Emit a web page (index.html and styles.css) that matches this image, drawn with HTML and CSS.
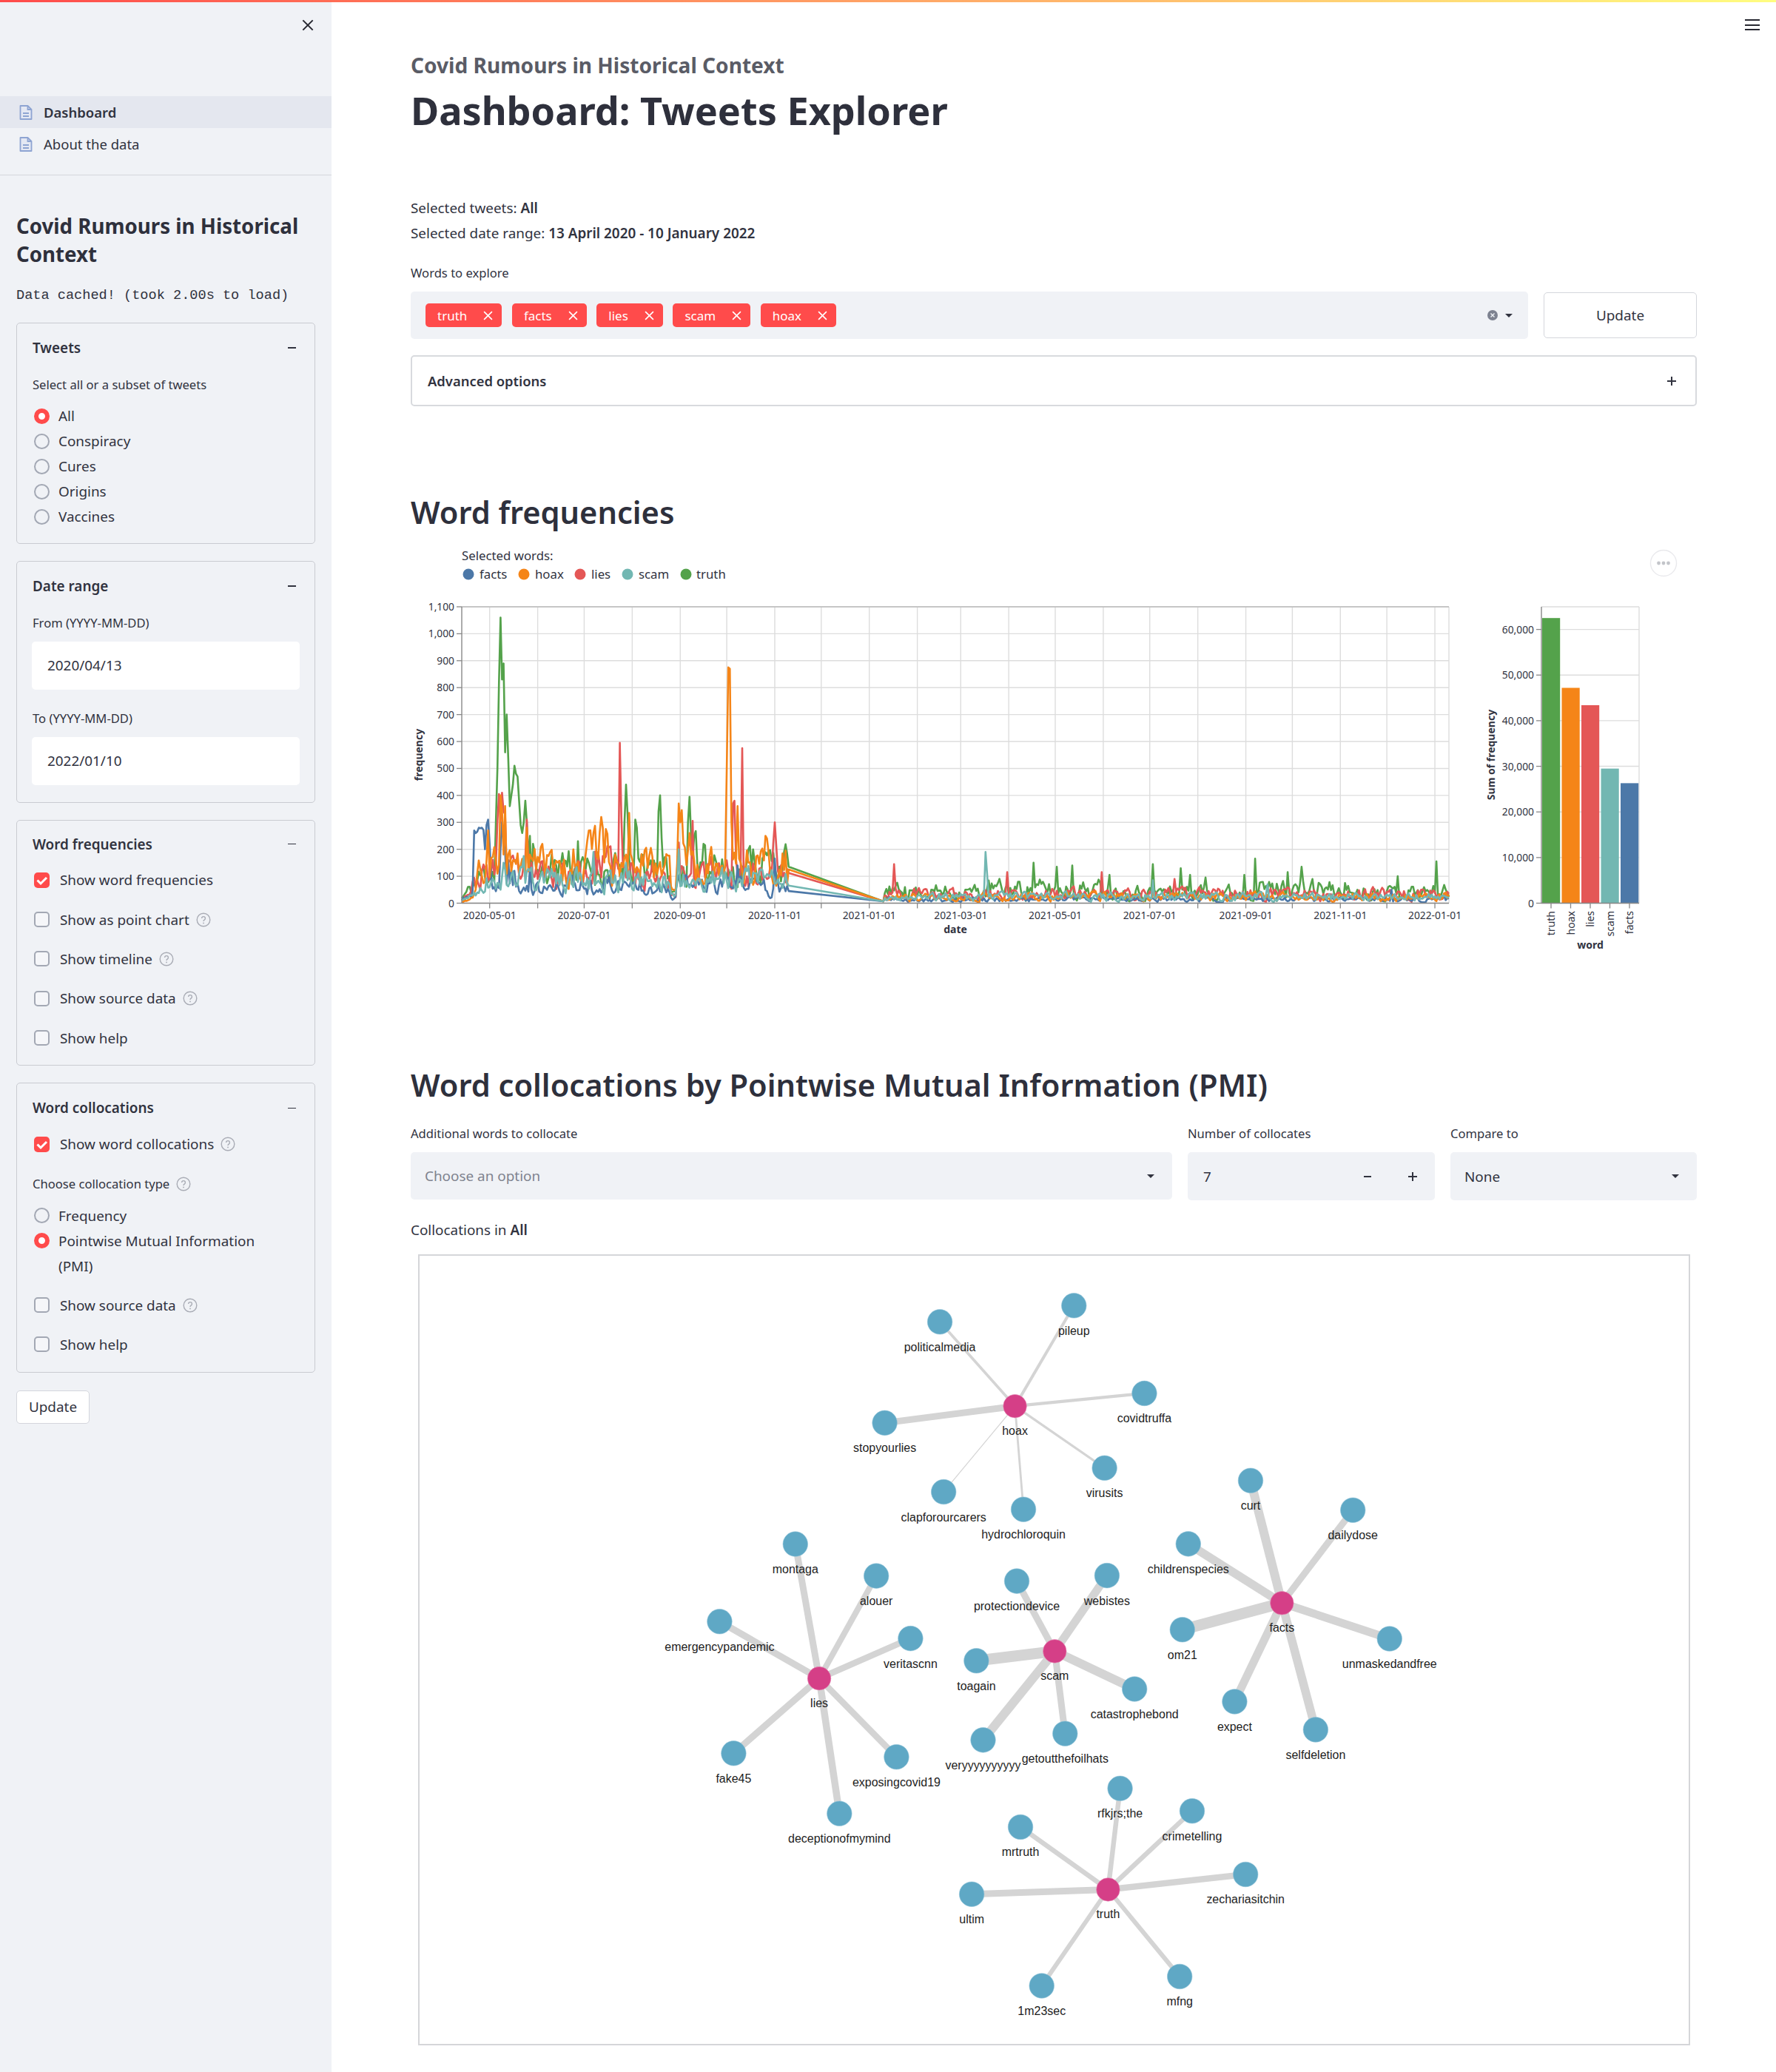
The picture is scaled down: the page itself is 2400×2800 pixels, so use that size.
FILE: index.html
```html
<!DOCTYPE html>
<html lang="en">
<head>
    <meta charset="UTF-8">
    <title>Dashboard: Tweets Explorer</title>
    <link rel="stylesheet" href="styles.css">
</head>
<body>
    <svg class="icon-defs" aria-hidden="true">
        <symbol id="i-page" viewBox="0 0 18 20">
            <path d="M1.5 1h10l5 5v13h-15z" fill="#e4e8f3" stroke="#8ea4d2" stroke-width="1.8" stroke-linejoin="round"/>
            <path d="M11.5 1v5h5M5 11h8M5 15h8" fill="none" stroke="#8ea4d2" stroke-width="1.8"/>
        </symbol>
        <symbol id="i-help" viewBox="0 0 20 20">
            <circle cx="10" cy="10" r="8.8" fill="none" stroke="#a9acb5" stroke-width="1.4"/>
            <path d="M7.6 8a2.4 2.4 0 1 1 3.6 2.1c-.8.5-1.2.9-1.2 1.8" fill="none" stroke="#a9acb5" stroke-width="1.4"/>
            <circle cx="10" cy="14.4" r=".9" fill="#a9acb5"/>
        </symbol>
        <symbol id="i-check" viewBox="0 0 21 21">
            <path d="M4.5 10.5l4.5 4.5 8-8" fill="none" stroke="#fff" stroke-width="3"/>
        </symbol>
        <symbol id="i-x" viewBox="0 0 12 12">
            <path d="M1 1l10 10M11 1l-10 10" fill="none" stroke="currentColor" stroke-width="1.5"/>
        </symbol>
    </svg>

    <div class="topline"></div>

    <div class="app">
        <aside class="sidebar">
            <div class="sidebar-top">
                <svg class="close-icon"><use href="#i-x"/></svg>
            </div>
            <nav class="side-nav">
                <a class="nav-item active"><svg class="nav-icon"><use href="#i-page"/></svg>Dashboard</a>
                <a class="nav-item"><svg class="nav-icon"><use href="#i-page"/></svg>About the data</a>
            </nav>

            <h2 class="side-title">Covid Rumours in Historical Context</h2>
            <code class="cache-note">Data cached! (took 2.00s to load)</code>

            <section class="group group-tweets">
                <div class="group-head"><span>Tweets</span><i class="minus"></i></div>
                <div class="side-label label-first">Select all or a subset of tweets</div>
                <div class="radios">
                    <div class="radio on"><i></i>All</div>
                    <div class="radio"><i></i>Conspiracy</div>
                    <div class="radio"><i></i>Cures</div>
                    <div class="radio"><i></i>Origins</div>
                    <div class="radio"><i></i>Vaccines</div>
                </div>
            </section>

            <section class="group group-dates">
                <div class="group-head"><span>Date range</span><i class="minus"></i></div>
                <div class="side-label label-from">From (YYYY-MM-DD)</div>
                <div class="date-input">2020/04/13</div>
                <div class="side-label label-to">To (YYYY-MM-DD)</div>
                <div class="date-input">2022/01/10</div>
            </section>

            <section class="group group-freq">
                <div class="group-head"><span>Word frequencies</span><i class="minus"></i></div>
                <div class="checks">
                    <div class="check on"><i><svg><use href="#i-check"/></svg></i>Show word frequencies</div>
                    <div class="check"><i></i>Show as point chart<svg class="help"><use href="#i-help"/></svg></div>
                    <div class="check"><i></i>Show timeline<svg class="help"><use href="#i-help"/></svg></div>
                    <div class="check"><i></i>Show source data<svg class="help"><use href="#i-help"/></svg></div>
                    <div class="check"><i></i>Show help</div>
                </div>
            </section>

            <section class="group group-coll">
                <div class="group-head"><span>Word collocations</span><i class="minus"></i></div>
                <div class="checks">
                    <div class="check on"><i><svg><use href="#i-check"/></svg></i>Show word collocations<svg class="help"><use href="#i-help"/></svg></div>
                </div>
                <div class="side-label label-type">Choose collocation type<svg class="help"><use href="#i-help"/></svg></div>
                <div class="radios radios-type">
                    <div class="radio"><i></i>Frequency</div>
                    <div class="radio on"><i></i><span class="radio-long">Pointwise Mutual Information (PMI)</span></div>
                </div>
                <div class="checks checks-last">
                    <div class="check"><i></i>Show source data<svg class="help"><use href="#i-help"/></svg></div>
                    <div class="check"><i></i>Show help</div>
                </div>
            </section>

            <button class="side-button">Update</button>
        </aside>

        <main class="main">
            <div class="hamburger"><i></i><i></i><i></i></div>

            <div class="subhead">Covid Rumours in Historical Context</div>
            <h1>Dashboard: Tweets Explorer</h1>

            <p class="selected first">Selected tweets: <b>All</b></p>
            <p class="selected">Selected date range: <b>13 April 2020 - 10 January 2022</b></p>

            <label class="field-label words-label">Words to explore</label>
            <div class="words-row">
                <div class="multiselect">
                    <span class="tag">truth<svg><use href="#i-x"/></svg></span>
                    <span class="tag">facts<svg><use href="#i-x"/></svg></span>
                    <span class="tag">lies<svg><use href="#i-x"/></svg></span>
                    <span class="tag">scam<svg><use href="#i-x"/></svg></span>
                    <span class="tag">hoax<svg><use href="#i-x"/></svg></span>
                    <span class="clear-all"><svg viewBox="0 0 14 14"><circle cx="7" cy="7" r="7" fill="#7d8290"/><path d="M4.5 4.5l5 5M9.5 4.5l-5 5" stroke="#f0f2f6" stroke-width="1.4"/></svg></span>
                    <i class="caret"></i>
                </div>
                <button class="update-button">Update</button>
            </div>

            <div class="expander"><span>Advanced options</span><i class="plus"></i></div>

            <h2 class="section-title freq-title">Word frequencies</h2>
            <svg id="freq-chart" class="freq-chart" viewBox="555 735 1738 565"></svg>

            <h2 class="section-title coll-title">Word collocations by Pointwise Mutual Information (PMI)</h2>
            <div class="coll-controls">
                <div class="control control-words">
                    <label class="field-label">Additional words to collocate</label>
                    <div class="select placeholder">Choose an option<i class="caret"></i></div>
                </div>
                <div class="control control-num">
                    <label class="field-label">Number of collocates</label>
                    <div class="select number">7<span class="stepper"><i class="step-minus"></i><i class="plus"></i></span></div>
                </div>
                <div class="control control-cmp">
                    <label class="field-label">Compare to</label>
                    <div class="select">None<i class="caret"></i></div>
                </div>
            </div>

            <p class="selected coll-in">Collocations in <b>All</b></p>
            <div class="graph-box">
                <svg id="coll-graph" class="coll-graph" viewBox="566 1696 1717 1066"></svg>
            </div>
        </main>
    </div>

    <script src="charts.js"></script>
</body>
</html>
```
FILE: styles.css
```css
* {
    box-sizing: border-box;
}
body {
    margin: 0;
    font-family: "Noto Sans", sans-serif;
    font-size: 18.9px;
    color: #31333f;
    background: #fff;
    width: 2400px;
    height: 2800px;
    overflow: hidden;
}
.icon-defs {
    position: absolute;
    width: 0;
    height: 0;
}
.topline {
    position: absolute;
    top: 0;
    left: 0;
    right: 0;
    height: 3px;
    background: linear-gradient(90deg, #ff4b4b, #fffd80);
}
.app {
    display: flex;
    height: 2800px;
}

/* sidebar */
.sidebar {
    width: 448px;
    flex: none;
    background: #f0f2f6;
    display: flex;
    flex-direction: column;
}
.sidebar-top {
    height: 130px;
    display: flex;
    justify-content: flex-end;
    padding: 26px 24px 0 0;
}
.close-icon {
    width: 16px;
    height: 16px;
    color: #262730;
}
.side-nav {
    padding-bottom: 20px;
    border-bottom: 1.5px solid #d4d6dc;
}
.nav-item {
    display: flex;
    align-items: center;
    height: 43px;
    padding-left: 26px;
    font-size: 18.5px;
    color: #31333f;
}
.nav-item.active {
    background: #e4e7ef;
    font-weight: 600;
}
.nav-icon {
    width: 18px;
    height: 20px;
    margin-right: 15px;
}
.side-title {
    margin: 49px 22px 0;
    font-size: 27.7px;
    line-height: 38px;
    font-weight: 700;
    color: #2e303c;
}
.cache-note {
    display: block;
    margin: 24px 22px 0;
    font-family: "Liberation Mono", monospace;
    font-size: 18.6px;
    line-height: 28px;
    color: #31333f;
}
.group {
    margin: 22px 22px 0;
    border: 1.5px solid #c9cbd1;
    border-radius: 5px;
    padding: 0 21px;
}
.group-dates, .group-freq, .group-coll {
    margin-top: 23px;
}
.group-head {
    display: flex;
    justify-content: space-between;
    align-items: center;
    height: 30px;
    font-weight: 600;
}
.group-tweets { padding-top: 18px; padding-bottom: 19px; }
.group-dates { padding-top: 18px; padding-bottom: 22.5px; }
.group-freq { padding-top: 17px; padding-bottom: 10px; }
.group-coll { padding-top: 18px; padding-bottom: 10px; }
.minus {
    width: 11px;
    height: 1.5px;
    margin-right: 4px;
    background: #31333f;
}
.side-label {
    display: flex;
    align-items: center;
    height: 26px;
    font-size: 16.6px;
}
.label-first { margin-top: 21px; }
.label-from { margin-top: 21px; }
.label-to { margin-top: 25px; }
.label-type { margin-top: 14px; }
.radios { margin-top: 13px; }
.radio {
    display: flex;
    min-height: 34px;
    line-height: 34px;
}
.radio i {
    flex: none;
    width: 21px;
    height: 21px;
    margin: 6.5px 12px 0 2px;
    border: 2px solid #a3a8b4;
    border-radius: 50%;
    background: #f0f2f6;
}
.radio.on i {
    border: 6.5px solid #ff4b4b;
    background: #fff;
}
.radio-long {
    max-width: 300px;
}
.date-input {
    height: 65px;
    margin: 13px -1px 0;
    padding-left: 21px;
    background: #fff;
    border-radius: 5px;
    line-height: 65px;
}
.checks { margin-top: 7px; }
.checks-last { margin-top: 9px; }
.check {
    display: flex;
    align-items: center;
    height: 53.4px;
}
.check i {
    flex: none;
    width: 21px;
    height: 21px;
    margin: 0 14px 0 2px;
    border: 2.3px solid #a3a8b4;
    border-radius: 5px;
    background: #f5f6f9;
}
.check.on i {
    border: none;
    background: #ff4b4b;
}
.check i svg {
    display: block;
    width: 21px;
    height: 21px;
}
.help {
    width: 20px;
    height: 20px;
    margin-left: 9px;
}
.side-button {
    align-self: flex-start;
    margin: 24px 0 0 22px;
    width: 99px;
    height: 45px;
    padding: 0;
    background: #fff;
    border: 1.5px solid #d4d6dc;
    border-radius: 5px;
    font: inherit;
    color: #31333f;
}

/* main column */
.main {
    position: relative;
    flex: 1;
    padding: 68px 107px 0;
}
.hamburger {
    position: absolute;
    top: 26px;
    right: 22px;
    width: 20px;
}
.hamburger i {
    display: block;
    height: 2px;
    margin-bottom: 4.5px;
    background: #262730;
}
.subhead {
    font-size: 28.1px;
    line-height: 40px;
    font-weight: 700;
    color: #5a5c66;
}
h1 {
    margin: 6px 0 0;
    font-size: 52.2px;
    line-height: 70px;
    font-weight: 700;
    color: #2e303c;
}
.selected {
    margin: 0;
    line-height: 34px;
}
.selected b {
    font-weight: 600;
}
.selected.first {
    margin-top: 80px;
}
.field-label {
    display: block;
    height: 26px;
    line-height: 26px;
    font-size: 16.6px;
}
.words-label {
    margin-top: 24px;
}
.words-row {
    display: flex;
    align-items: flex-start;
    gap: 21px;
    margin-top: 12px;
}
.multiselect {
    flex: 1;
    display: flex;
    align-items: center;
    gap: 13.6px;
    height: 64px;
    padding: 0 21px 0 20px;
    background: #f0f2f6;
    border-radius: 5px;
}
.tag {
    display: flex;
    align-items: center;
    height: 32px;
    padding: 0 12px 0 16px;
    background: #ff4b4b;
    color: #fff;
    border-radius: 5px;
    font-size: 17px;
}
.tag svg {
    width: 13px;
    height: 13px;
    margin-left: 22px;
}
.clear-all {
    margin-left: auto;
    height: 14px;
}
.clear-all svg {
    display: block;
    width: 14px;
    height: 14px;
}
.caret {
    width: 0;
    height: 0;
    border-left: 5px solid transparent;
    border-right: 5px solid transparent;
    border-top: 5px solid #31333f;
}
.multiselect .caret {
    margin-left: -4px;
}
.update-button {
    width: 207px;
    height: 62px;
    margin-top: 1px;
    background: #fff;
    border: 1.5px solid #d4d6dc;
    border-radius: 5px;
    font: inherit;
    color: #31333f;
}
.expander {
    display: flex;
    justify-content: space-between;
    align-items: center;
    height: 69px;
    margin-top: 22px;
    padding: 0 26px 0 21px;
    border: 2px solid #d8dade;
    border-radius: 5px;
    font-size: 18.4px;
    font-weight: 600;
}
.plus {
    position: relative;
    display: block;
    width: 12px;
    height: 12px;
}
.plus::before, .plus::after {
    content: "";
    position: absolute;
    background: #31333f;
}
.plus::before {
    left: 0;
    right: 0;
    top: 5px;
    height: 2px;
}
.plus::after {
    top: 0;
    bottom: 0;
    left: 5px;
    width: 2px;
}
.section-title {
    margin: 0;
    font-size: 41.6px;
    line-height: 60px;
    font-weight: 600;
    color: #2e303c;
}
.freq-title {
    margin-top: 113px;
}
.freq-chart {
    display: block;
    width: 1738px;
    height: 565px;
    margin-top: 13px;
}
.coll-title {
    margin-top: 136px;
}
.coll-controls {
    display: flex;
    gap: 21px;
    margin-top: 23px;
}
.control-words { width: 1029px; }
.control-num { width: 334px; }
.control-cmp { width: 333px; }
.select {
    display: flex;
    justify-content: space-between;
    align-items: center;
    height: 65px;
    margin-top: 12px;
    padding: 0 24px 0 19px;
    background: #f0f2f6;
    border-radius: 5px;
}
.control-words .select {
    height: 64px;
}
.placeholder {
    color: #7f838f;
}
.number {
    padding-left: 21px;
    padding-right: 24px;
}
.stepper {
    display: flex;
    align-items: center;
    gap: 50px;
}
.step-minus {
    width: 10px;
    height: 2px;
    background: #31333f;
}
.coll-in {
    margin-top: 23px;
}
.graph-box {
    width: 1719px;
    height: 1069px;
    margin: 16px 0 0 10px;
    border: 2px solid #d5d6d9;
}
.coll-graph {
    display: block;
    width: 1715px;
    height: 1065px;
}

/* svg charts */
.tick-text {
    font-family: "Noto Sans", sans-serif;
    font-size: 13.8px;
    fill: #31333f;
}
.axis-title {
    font-family: "Noto Sans", sans-serif;
    font-size: 14px;
    font-weight: 700;
    fill: #31333f;
}
.legend-title, .legend-text {
    font-family: "Noto Sans", sans-serif;
    font-size: 16.8px;
    fill: #31333f;
}
.bar-label {
    font-family: "Noto Sans", sans-serif;
    font-size: 14px;
    fill: #31333f;
}
.node-label {
    font-family: "Liberation Sans", Arial, sans-serif;
    font-size: 16px;
    fill: #1d1d1d;
    text-anchor: middle;
}
```
FILE: charts.js
```js
// word frequency chart + collocation graph, drawn into the two svgs

const COLORS = {
    facts: "#4c78a8",
    hoax: "#f58518",
    lies: "#e45756",
    scam: "#72b7b2",
    truth: "#54a24b"
};

const X0 = 624, PX_DAY = 2.094;
const Y0 = 1220.5, PX_VAL = 0.3641;
const xDay = d => X0 + d * PX_DAY;
const yVal = v => Y0 - v * PX_VAL;

// small seeded generator so the noise is the same on every load
function makeRand(seed) {
    return function () {
        seed = (seed + 0x6D2B79F5) | 0;
        let t = Math.imul(seed ^ (seed >>> 15), 1 | seed);
        t = (t + Math.imul(t ^ (t >>> 7), 61 | t)) ^ t;
        return ((t ^ (t >>> 14)) >>> 0) / 4294967296;
    };
}

// base = [first stretch level, second stretch level], peaks = [day, value],
// humps = [from, to, factor] for slow changes of the level
const SERIES = {
    truth: {
        base: [120, 42], seed: 11, end: 135, humps: [[60, 70, 1.3], [115, 128, 1.2], [150, 165, 1.35], [185, 211, 1.25], [340, 420, 1.25], [505, 560, 1.3]],
        peaks: [[22, 300], [23, 500], [24, 820], [25, 1060], [26, 830], [27, 890], [28, 560], [29, 700], [30, 540], [31, 360], [32, 400],
            [33, 440], [34, 510], [35, 480], [36, 470], [37, 380], [38, 290], [39, 260], [40, 300], [41, 380], [42, 300], [44, 250], [46, 220], [47, 190],
            [58, 180], [75, 230], [105, 300], [106, 440], [107, 330], [112, 310], [113, 280], [127, 340], [128, 400], [129, 240],
            [146, 300], [147, 395], [148, 250], [156, 220], [157, 215], [188, 200], [208, 190],
            [286, 60], [369, 150], [384, 135], [394, 140], [418, 105], [446, 145], [464, 130], [470, 105], [480, 95],
            [512, 165], [505, 105], [533, 115], [542, 135], [570, 75], [604, 100], [629, 155]]
    },
    lies: {
        base: [112, 34], seed: 23, end: 112, humps: [[85, 100, 1.25]],
        peaks: [[23, 300], [24, 405], [25, 300], [26, 410], [27, 340], [28, 330], [42, 310], [60, 130], [88, 190], [102, 595], [103, 320], [140, 225],
            [149, 305], [175, 370], [176, 380], [181, 575], [201, 220], [202, 300], [203, 210], [279, 145], [352, 115], [413, 115], [460, 90]]
    },
    facts: {
        base: [68, 14], seed: 37, end: 45, humps: [[35, 65, 0.75], [196, 211, 0.7]],
        peaks: [[8, 270], [9, 260], [10, 265], [11, 280], [12, 278], [13, 280], [14, 272], [15, 200], [16, 290], [17, 310],
            [18, 220], [25, 200], [26, 300], [27, 230], [28, 190], [30, 160], [32, 125], [34, 120], [44, 130], [140, 100], [178, 140], [202, 165], [600, 50]]
    },
    hoax: {
        base: [145, 24], seed: 51, end: 125, humps: [[0, 9, 0.35], [72, 96, 1.35], [140, 150, 1.2]],
        peaks: [[12, 125], [17, 270], [25, 400], [26, 350], [28, 360], [42, 280], [52, 220], [72, 200], [82, 270], [90, 320], [91, 280], [93, 275],
            [108, 335], [122, 205], [140, 370], [141, 300], [142, 345], [147, 260], [171, 500], [172, 875], [173, 870], [174, 300],
            [178, 360], [196, 250], [197, 240], [209, 195]]
    },
    scam: {
        base: [88, 24], seed: 67, end: 65, humps: [[0, 15, 0.65]],
        peaks: [[27, 150], [40, 175], [85, 190], [106, 150], [140, 200], [338, 190], [339, 110], [446, 85], [520, 70]]
    }
};
const DRAW_ORDER = ["truth", "lies", "facts", "hoax", "scam"];

function seriesPoints(cfg) {
    const rand = makeRand(cfg.seed);
    const peaks = {};
    cfg.peaks.forEach(p => { peaks[p[0]] = p[1]; });
    const pts = [];
    let wobble = 0;
    for (let d = 0; d <= 637; d++) {
        if (d > 211 && d < 272) {
            continue;
        }
        const amp = d <= 211 ? 0.85 : 1.15;
        wobble = wobble * 0.45 + (rand() - 0.5) * amp;
        let level = d <= 211 ? cfg.base[0] * Math.min(1, 0.15 + d / 18) : cfg.base[1];
        level *= Math.max(0.15, 1 + wobble);
        cfg.humps.forEach(h => {
            if (d >= h[0] && d <= h[1]) {
                level *= h[2];
            }
        });
        // every word drops at the end of august
        if (d >= 135 && d <= 138) level *= 0.3;
        if (d === 211) level = cfg.end;
        if (d === 272) level = 7;
        if (peaks[d]) level = peaks[d];
        pts.push(xDay(d).toFixed(1) + "," + yVal(level).toFixed(1));
    }
    return pts.join(" ");
}

function drawFreqChart(svg) {
    let out = "";
    const right = 1958, top = 820;

    // legend
    out += `<text class="legend-title" x="624" y="757">Selected words:</text>`;
    [["facts", 633, 648], ["hoax", 708, 723], ["lies", 784, 799], ["scam", 848, 863], ["truth", 927, 941]].forEach(l => {
        out += `<circle cx="${l[1]}" cy="776" r="7.5" fill="${COLORS[l[0]]}"/>`;
        out += `<text class="legend-text" x="${l[2]}" y="782">${l[0]}</text>`;
    });

    // horizontal grid + y labels
    for (let v = 0; v <= 1100; v += 100) {
        const y = yVal(v);
        out += `<line x1="${X0}" x2="${right}" y1="${y}" y2="${y}" stroke="#ddd" stroke-width="1.4"/>`;
        out += `<line x1="${X0 - 7}" x2="${X0}" y1="${y}" y2="${y}" stroke="#888" stroke-width="1.3"/>`;
        out += `<text class="tick-text" x="${X0 - 10}" y="${y + 5}" text-anchor="end">${v.toLocaleString("en-US")}</text>`;
    }

    // vertical grid, one line a month
    const start = Date.UTC(2020, 3, 13);
    for (let m = 4; m <= 24; m++) {
        const date = new Date(Date.UTC(2020, m, 1));
        const x = xDay((date - start) / 86400000);
        out += `<line x1="${x}" x2="${x}" y1="${top}" y2="${Y0}" stroke="#ddd" stroke-width="1.4"/>`;
        out += `<line x1="${x}" x2="${x}" y1="${Y0}" y2="${Y0 + 7}" stroke="#888" stroke-width="1.3"/>`;
        if (m % 2 === 0) {
            out += `<text class="tick-text" x="${x}" y="${Y0 + 21}" text-anchor="middle">${date.toISOString().slice(0, 10)}</text>`;
        }
    }
    out += `<line x1="${right}" x2="${right}" y1="${top}" y2="${Y0}" stroke="#ddd" stroke-width="1.4"/>`;
    out += `<line x1="${X0}" x2="${right}" y1="${top}" y2="${top}" stroke="#bbb" stroke-width="1.6"/>`;

    DRAW_ORDER.forEach(name => {
        out += `<polyline points="${seriesPoints(SERIES[name])}" fill="none" stroke="${COLORS[name]}" stroke-width="2.6" stroke-linejoin="round"/>`;
    });

    out += `<line x1="${X0}" x2="${X0}" y1="${top}" y2="${Y0}" stroke="#888" stroke-width="1.4"/>`;
    out += `<line x1="${X0}" x2="${right}" y1="${Y0}" y2="${Y0}" stroke="#888" stroke-width="1.4"/>`;
    out += `<text class="axis-title" x="1291" y="1261" text-anchor="middle">date</text>`;
    out += `<text class="axis-title" transform="translate(571 1020) rotate(-90)" text-anchor="middle">frequency</text>`;

    out += drawBars();

    // "..." chart menu
    out += `<circle cx="2248" cy="761" r="17.5" fill="#fff" stroke="#e9e9ec" stroke-width="1.4"/>`;
    [2241.5, 2248, 2254.5].forEach(x => {
        out += `<circle cx="${x}" cy="761" r="2.4" fill="#c3c5ca"/>`;
    });

    svg.innerHTML = out;
}

function drawBars() {
    const left = 2083, right = 2215, top = 820;
    const yBar = v => Y0 - v * 0.006165;
    const bars = [["truth", 62500], ["hoax", 47200], ["lies", 43400], ["scam", 29500], ["facts", 26300]];
    let out = "";

    for (let v = 0; v <= 60000; v += 10000) {
        const y = yBar(v);
        out += `<line x1="${left}" x2="${right}" y1="${y}" y2="${y}" stroke="#ddd" stroke-width="1.4"/>`;
        out += `<line x1="${left - 7}" x2="${left}" y1="${y}" y2="${y}" stroke="#888" stroke-width="1.3"/>`;
        out += `<text class="tick-text" x="${left - 10}" y="${y + 5}" text-anchor="end">${v.toLocaleString("en-US")}</text>`;
    }
    out += `<line x1="${left}" x2="${right}" y1="${top}" y2="${top}" stroke="#ddd" stroke-width="1.4"/>`;
    out += `<line x1="${right}" x2="${right}" y1="${top}" y2="${Y0}" stroke="#ddd" stroke-width="1.4"/>`;

    bars.forEach((b, i) => {
        const x = left + 26.5 * i;
        const y = yBar(b[1]);
        out += `<rect x="${x + 1}" y="${y}" width="24.2" height="${Y0 - y}" fill="${COLORS[b[0]]}"/>`;
        out += `<line x1="${x + 13}" x2="${x + 13}" y1="${Y0}" y2="${Y0 + 7}" stroke="#888" stroke-width="1.3"/>`;
        out += `<text class="bar-label" transform="translate(${x + 18} 1231) rotate(-90)" text-anchor="end">${b[0]}</text>`;
    });

    out += `<line x1="${left}" x2="${left}" y1="${top}" y2="${Y0}" stroke="#888" stroke-width="1.4"/>`;
    out += `<line x1="${left}" x2="${right}" y1="${Y0}" y2="${Y0}" stroke="#888" stroke-width="1.4"/>`;
    out += `<text class="axis-title" x="2149" y="1282" text-anchor="middle">word</text>`;
    out += `<text class="axis-title" transform="translate(2020 1020) rotate(-90)" text-anchor="middle">Sum of frequency</text>`;
    return out;
}

// hub, then its collocates as [word, x, y, edge width]
const GRAPH = [
    { word: "hoax", x: 1371.5, y: 1899.3, leaves: [
        ["pileup", 1451.3, 1763.3, 4], ["politicalmedia", 1269.9, 1785.3, 3.6], ["covidtruffa", 1546.6, 1882, 4.2],
        ["stopyourlies", 1195.3, 1922, 9], ["virusits", 1492.7, 1983, 3.2], ["clapforourcarers", 1275, 2015.3, 1.2],
        ["hydrochloroquin", 1383, 2039, 2.8]] },
    { word: "facts", x: 1732.7, y: 2165.7, leaves: [
        ["curt", 1690.3, 2000, 12], ["dailydose", 1828.7, 2040, 9], ["childrenspecies", 1606, 2085.7, 11.5],
        ["om21", 1598, 2201.7, 15], ["unmaskedandfree", 1878.3, 2214, 11], ["expect", 1668.7, 2299, 11],
        ["selfdeletion", 1778.3, 2337, 11.5]] },
    { word: "lies", x: 1106.7, y: 2267.7, leaves: [
        ["montaga", 1074.4, 2085.9, 9], ["alouer", 1183.9, 2129, 8], ["veritascnn", 1230.2, 2213.6, 8.5],
        ["emergencypandemic", 971.9, 2190.7, 9], ["fake45", 990.9, 2369, 9], ["exposingcovid19", 1211.2, 2373.9, 8.5],
        ["deceptionofmymind", 1134, 2450.5, 9.5]] },
    { word: "scam", x: 1425.3, y: 2230.9, leaves: [
        ["protectiondevice", 1374, 2136, 9], ["webistes", 1496, 2128.5, 11], ["toagain", 1319.3, 2243.8, 15],
        ["catastrophebond", 1533.3, 2282, 12], ["veryyyyyyyyyy", 1328.4, 2351, 12], ["getoutthefoilhats", 1439.3, 2342.3, 9]] },
    { word: "truth", x: 1497.5, y: 2553.3, leaves: [
        ["rfkjrs;the", 1513.7, 2416.5, 6.5], ["crimetelling", 1611.2, 2447, 6.5], ["mrtruth", 1379, 2468.7, 6.5],
        ["zechariasitchin", 1683.5, 2532.8, 8.5], ["ultim", 1313, 2559.6, 9], ["1m23sec", 1407.7, 2683.5, 6], ["mfng", 1594.4, 2671, 6]] }
];

function drawGraph(svg) {
    let edges = "", nodes = "", labels = "";
    GRAPH.forEach(hub => {
        hub.leaves.forEach(l => {
            edges += `<line x1="${hub.x}" y1="${hub.y}" x2="${l[1]}" y2="${l[2]}" stroke="#d4d4d4" stroke-width="${l[3]}"/>`;
            nodes += `<circle cx="${l[1]}" cy="${l[2]}" r="16.8" fill="#5fa8c5" stroke="#8fc2d8" stroke-width=".6"/>`;
            labels += `<text class="node-label" x="${l[1]}" y="${l[2] + 39.5}">${l[0]}</text>`;
        });
        nodes += `<circle cx="${hub.x}" cy="${hub.y}" r="15.8" fill="#d53f87" stroke="#e58ab5" stroke-width=".6"/>`;
        labels += `<text class="node-label" x="${hub.x}" y="${hub.y + 38.5}">${hub.word}</text>`;
    });
    svg.innerHTML = edges + nodes + labels;
}

drawFreqChart(document.getElementById("freq-chart"));
drawGraph(document.getElementById("coll-graph"));
```
